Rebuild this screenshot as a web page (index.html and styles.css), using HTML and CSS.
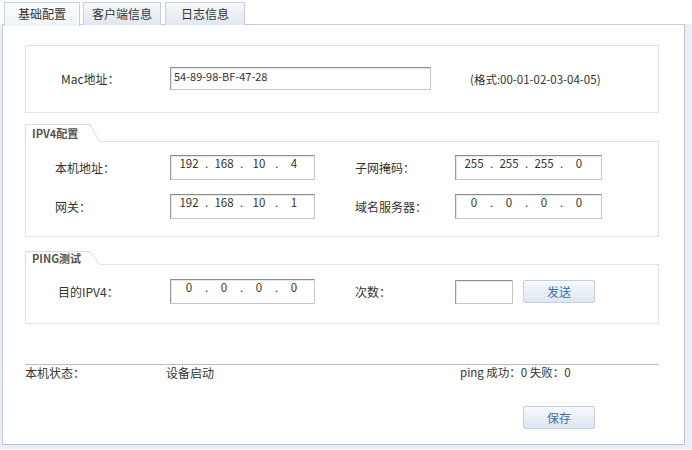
FILE: index.html
```html
<!DOCTYPE html>
<html>
<head>
<meta charset="utf-8">
<link rel="stylesheet" href="styles.css">
</head>
<body>
<div class="tabs">
  <div class="tab tab-1 active">基础配置</div>
  <div class="tab tab-2">客户端信息</div>
  <div class="tab tab-3">日志信息</div>
</div>
<div class="frame">
  <div class="panel">
    <div class="box mac-box">
      <div class="mac-row">
        <span class="label mac-label">Mac地址：</span>
        <div class="input mac-input">54-89-98-BF-47-28</div>
        <span class="hint">(格式:00-01-02-03-04-05)</span>
      </div>
    </div>

    <div class="group ipv4">
      <div class="group-head">
        <div class="group-tab">IPV4配置</div>
        <svg class="slant" width="10" height="18" viewBox="0 0 10 18"><path d="M0 0.5 L9.5 17.5" stroke="#dcdcdc" stroke-width="1" fill="none"/></svg>
        <div class="group-fill"></div>
      </div>
      <div class="group-body grid">
        <span class="label">本机地址：</span>
        <div class="input ip"><span>192</span><i>.</i><span>168</span><i>.</i><span>10</span><i>.</i><span>4</span></div>
        <span class="label right">子网掩码：</span>
        <div class="input ip wide"><span>255</span><i>.</i><span>255</span><i>.</i><span>255</span><i>.</i><span>0</span></div>
        <span class="label">网关：</span>
        <div class="input ip"><span>192</span><i>.</i><span>168</span><i>.</i><span>10</span><i>.</i><span>1</span></div>
        <span class="label right">域名服务器：</span>
        <div class="input ip wide"><span>0</span><i>.</i><span>0</span><i>.</i><span>0</span><i>.</i><span>0</span></div>
      </div>
    </div>

    <div class="group ping">
      <div class="group-head short">
        <div class="group-tab">PING测试</div>
        <svg class="slant" width="10" height="14" viewBox="0 0 10 14"><path d="M0 0.5 L9.5 13.5" stroke="#dcdcdc" stroke-width="1" fill="none"/></svg>
        <div class="group-fill"></div>
      </div>
      <div class="group-body grid ping-grid">
        <span class="label ping-label">目的IPV4：</span>
        <div class="input ip"><span>0</span><i>.</i><span>0</span><i>.</i><span>0</span><i>.</i><span>0</span></div>
        <span class="label right">次数：</span>
        <div class="count-wrap">
          <div class="input count"></div>
          <button class="btn">发送</button>
        </div>
      </div>
    </div>

    <div class="status">
      <span class="st-label">本机状态：</span>
      <span class="st-value">设备启动</span>
      <span class="st-ping">ping 成功：0 失败：0</span>
    </div>

    <div class="actions">
      <button class="btn">保存</button>
    </div>
  </div>
</div>
</body>
</html>
```

FILE: styles.css
```css
* { box-sizing: border-box; }
html, body { margin: 0; padding: 0; }
body {
  width: 692px;
  height: 450px;
  background: #ffffff;
  font-family: "Noto Sans CJK SC", "Microsoft YaHei", sans-serif;
  font-size: 12px;
  color: #333333;
  overflow: hidden;
}
.tabs {
  display: flex;
  height: 25px;
  padding-top: 2px;
  padding-left: 4px;
  gap: 3px;
}
.tab {
  height: 23px;
  line-height: 21px;
  text-align: center;
  border: 1px solid #c8d0da;
  border-bottom: none;
  background: linear-gradient(#f6f8fb, #dfe7f1);
  color: #333;
  font-size: 12px;
}
.tab-1 { width: 76px; }
.tab-2 { width: 78px; }
.tab-3 { width: 80px; margin-left: 1px; }
.tab.active {
  background: linear-gradient(#fafbfd, #f1f4f8);
  height: 24px;
  position: relative;
  z-index: 2;
}
.frame {
  background: #e8eff9;
  height: 425px;
  padding-left: 2px;
  margin-top: -1px;
}
.panel {
  width: 683px;
  height: 421px;
  background: #ffffff;
  border: 1px solid #c6cdd4;
  border-right-color: #bfc3c7;
  border-bottom-color: #bfc3c7;
  padding-left: 22px;
  padding-top: 20px;
}
.box {
  width: 634px;
  border: 1px solid #e3e3e3;
}
.mac-box {
  height: 68px;
  padding-top: 21px;
}
.mac-row {
  display: flex;
  align-items: center;
  padding-left: 35px;
}
.label { white-space: nowrap; }
.mac-label { width: 109px; }
.input {
  background: #fff;
  border: 1px solid #a9a9a9;
  border-top-color: #8e8e8e;
  border-left-color: #9a9a9a;
  border-bottom-color: #c6c6c6;
  border-right-color: #c6c6c6;
  box-shadow: inset 1px 1px 0 #e6e6e6;
}
.mac-input {
  width: 261px;
  height: 23px;
  padding-left: 3px;
  line-height: 17px;
  font-size: 11px;
}
.hint { margin-left: 39px; font-size: 11.5px; }

.group { width: 634px; }
.ipv4 { margin-top: 11px; }
.ping { margin-top: 14px; }
.group-head {
  display: flex;
  height: 18px;
}
.group-head.short { height: 14px; }
.group-tab {
  width: 65px;
  border-left: 1px solid #dcdcdc;
  border-top: 1px solid #dcdcdc;
  padding-left: 6px;
  font-size: 11px;
  font-weight: bold;
  color: #555;
  line-height: 16px;
}
.short .group-tab { line-height: 12px; }
.slant { display: block; flex: none; }
.group-fill {
  flex: 1;
  border-bottom: 1px solid #e3e3e3;
}
.group-body {
  border: 1px solid #e3e3e3;
  border-top: none;
}
.grid {
  display: grid;
  grid-template-columns: 115px 145px 140px 147px;
  align-items: center;
  align-content: start;
  padding-left: 29px;
}
.label.right { padding-left: 40px; }
.ipv4 .group-body {
  height: 95px;
  padding-top: 13px;
  row-gap: 14px;
  grid-template-rows: 25px 25px;
}
.ip {
  height: 25px;
  display: flex;
  padding-left: 4px;
  line-height: 15px;
  font-size: 11.5px;
}
.ip span { width: 28px; text-align: center; }
.ip i { width: 7px; font-style: normal; text-align: center; }
.ping .group-body {
  height: 59px;
  padding-top: 14px;
  grid-template-rows: 25px;
}
.ping-label { padding-left: 3px; }
.count-wrap {
  display: flex;
  align-items: center;
  gap: 10px;
}
.count {
  width: 58px;
  height: 24px;
}
.btn {
  width: 72px;
  height: 23px;
  border: 1px solid #c5d0dc;
  border-radius: 2px;
  background: linear-gradient(#f7f9fc, #dde7f2);
  color: #3f6da6;
  font-family: "Noto Sans CJK SC", sans-serif;
  font-size: 12px;
  padding: 0;
  margin: 0;
  line-height: 19px;
}
.status {
  margin-top: 40px;
  width: 634px;
  border-top: 1px solid #bdbdbd;
  display: flex;
  height: 17px;
  line-height: 15px;
}
.st-label { width: 141px; }
.st-value { width: 294px; }
.st-ping { font-size: 11.5px; }
.actions {
  margin-top: 25px;
  padding-left: 498px;
}
```
